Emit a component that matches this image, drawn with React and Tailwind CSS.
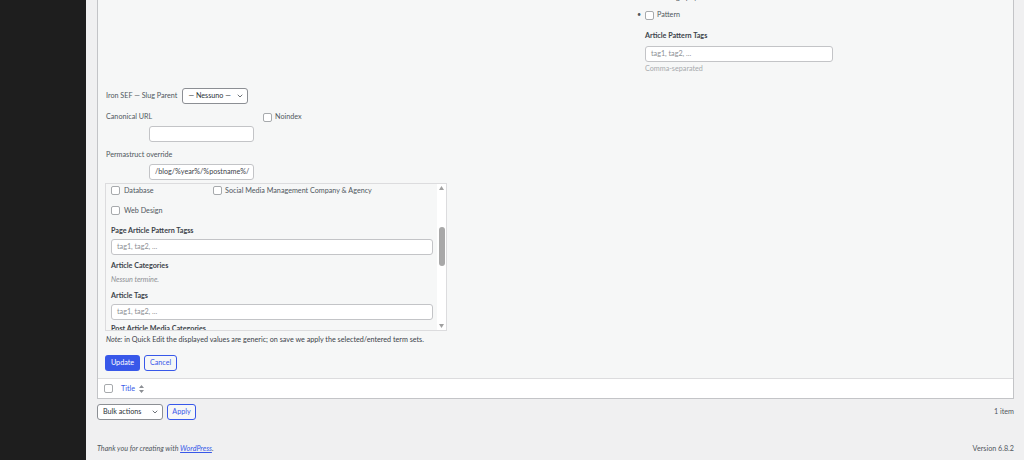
import { ChevronDown } from 'lucide-react'

const Check = ({ className = '' }) => (
  <span className={`inline-block w-[9px] h-[9px] rounded-[2px] border border-[#a7aaad] bg-white shrink-0 ${className}`} />
)

const Field = ({ w, value, placeholder, className = '' }) => (
  <div className={`h-[16px] rounded-[3px] border border-[#c3c4c7] bg-white flex items-center px-[5px] overflow-hidden whitespace-nowrap ${w} ${className}`}>
    {value ? <span className="text-[#3c434a]">{value}</span> : <span className="text-[#8c8f94]">{placeholder}</span>}
  </div>
)

const Label = ({ children, className = '' }) => (
  <div className={`h-[12px] flex items-center font-bold text-[#3c434a] ${className}`}>{children}</div>
)

function ScrollBox() {
  return (
    <div className="mt-[3px] w-[342px] h-[148px] border border-[#dcdcde] flex overflow-hidden">
      <div className="flex-1 pl-[5px] pr-[3px] overflow-hidden">
        <div className="h-[13px] flex items-center">
          <div className="w-[102px] flex items-center">
            <Check />
            <span className="ml-[4px] text-[#50575e]">Database</span>
          </div>
          <Check />
          <span className="ml-[3px] text-[#50575e]">Social Media Management Company &amp; Agency</span>
        </div>
        <div className="mt-[7px] h-[13px] flex items-center">
          <Check />
          <span className="ml-[4px] text-[#50575e]">Web Design</span>
        </div>
        <Label className="mt-[8px]">Page Article Pattern Tagss</Label>
        <Field w="w-[322px]" placeholder="tag1, tag2, ..." className="mt-[2px]" />
        <Label className="mt-[5px]">Article Categories</Label>
        <div className="mt-[2px] h-[12px] flex items-center italic text-[#8c8f94]">Nessun termine.</div>
        <Label className="mt-[4px]">Article Tags</Label>
        <Field w="w-[322px]" placeholder="tag1, tag2, ..." className="mt-[2px]" />
        <Label className="mt-[3px]">Post Article Media Categories</Label>
      </div>
      <div className="w-[9px] bg-white flex flex-col items-center">
        <svg className="mt-[2px]" width="5" height="4" viewBox="0 0 5 4"><path d="M0 4 L2.5 0 L5 4Z" fill="#a0a0a0" /></svg>
        <div className="mt-[37px] w-[6px] h-[39px] rounded-[3px] bg-[#a8a8a8]" />
        <svg className="mt-auto mb-[2px]" width="5" height="4" viewBox="0 0 5 4"><path d="M0 0 L2.5 4 L5 0Z" fill="#a0a0a0" /></svg>
      </div>
    </div>
  )
}

export default function App() {
  return (
    <div className="flex min-h-[460px] bg-[#f0f0f1] font-['Lato',sans-serif] text-[7.2px] leading-none overflow-hidden">
      <aside className="w-[86px] shrink-0 bg-[#1e1e1e]" />

      <main className="flex-1 pl-[11px] pr-[10px] flex flex-col">
        <div className="border-x border-b border-[#c3c4c7] bg-white">
          {/* Quick edit */}
          <div className="bg-[#f6f7f7] pl-[7px] pb-[7px] border-b border-[#dcdcde]">
            <div className="pl-[532px] -mt-[10px]">
              <div className="h-[16px] flex items-center pl-[20px] text-[#50575e]">Photography</div>
              <div className="mt-[2px] h-[14px] flex items-center">
                <span className="w-[8px] text-[#50575e]">•</span>
                <Check />
                <span className="ml-[3px] text-[#50575e]">Pattern</span>
              </div>
              <div className="pl-[8px]">
                <Label className="mt-[8px]">Article Pattern Tags</Label>
                <Field w="w-[188px]" placeholder="tag1, tag2, ..." className="mt-[4px]" />
                <div className="mt-[1px] h-[12px] flex items-center text-[#a7aaad]">Comma-separated</div>
              </div>
            </div>

            <div className="mt-[13px] h-[16px] flex items-center">
              <span className="pl-[1px] text-[#50575e]">Iron SEF — Slug Parent</span>
              <div className="ml-[5px] w-[66px] h-[16px] rounded-[3px] border border-[#8c8f94] bg-white flex items-center pl-[5px] pr-[3px] text-[#2c3338]">
                <span className="flex-1">— Nessuno —</span>
                <ChevronDown size={8} strokeWidth={2.5} className="text-[#50575e]" />
              </div>
            </div>

            <div className="mt-[7px] flex">
              <div className="w-[158px] pl-[1px]">
                <div className="h-[12px] flex items-center text-[#50575e]">Canonical URL</div>
                <Field w="w-[105px]" className="mt-[3px] ml-[43px]" />
              </div>
              <div className="h-[12px] flex items-center">
                <Check />
                <span className="ml-[3px] text-[#50575e]">Noindex</span>
              </div>
            </div>

            <div className="pl-[1px]">
              <div className="mt-[7px] h-[12px] flex items-center text-[#50575e]">Permastruct override</div>
              <Field w="w-[105px]" value="/blog/%year%/%postname%/" className="mt-[3px] ml-[43px]" />
            </div>

            <ScrollBox />

            <div className="mt-[3px] h-[12px] flex items-center pl-[1px] text-[#3c434a]">
              <span><em>Note:</em> in Quick Edit the displayed values are generic; on save we apply the selected/entered term sets.</span>
            </div>

            <div className="mt-[9px] flex gap-[4px]">
              <button className="w-[35px] h-[16px] rounded-[3px] bg-[#3858e9] text-white">Update</button>
              <button className="w-[33px] h-[16px] rounded-[3px] border border-[#3858e9] text-[#3858e9] bg-[#f6f7f7]">Cancel</button>
            </div>
          </div>

          {/* Table header */}
          <div className="h-[19px] flex items-center pl-[6px]">
            <Check />
            <span className="ml-[8px] text-[#3858e9]">Title</span>
            <svg className="ml-[4px]" width="5" height="8" viewBox="0 0 5 8">
              <path d="M0 3 L2.5 0 L5 3Z M0 5 L2.5 8 L5 5Z" fill="#8c8f94" />
            </svg>
          </div>
        </div>

        {/* Bulk actions */}
        <div className="mt-[5px] flex items-center">
          <div className="w-[66px] h-[16px] rounded-[3px] border border-[#8c8f94] bg-white flex items-center pl-[5px] pr-[3px] text-[#2c3338]">
            <span className="flex-1">Bulk actions</span>
            <ChevronDown size={8} strokeWidth={2.5} className="text-[#50575e]" />
          </div>
          <button className="ml-[4px] w-[29px] h-[16px] rounded-[3px] border border-[#3858e9] text-[#3858e9] bg-[#f6f7f7]">Apply</button>
          <span className="ml-auto text-[#50575e]">1 item</span>
        </div>

        {/* Footer */}
        <div className="mt-[23px] h-[12px] flex items-center text-[#50575e]">
          <span className="italic">Thank you for creating with <a className="underline text-[#3858e9]">WordPress</a>.</span>
          <span className="ml-auto">Version 6.8.2</span>
        </div>
      </main>
    </div>
  )
}
